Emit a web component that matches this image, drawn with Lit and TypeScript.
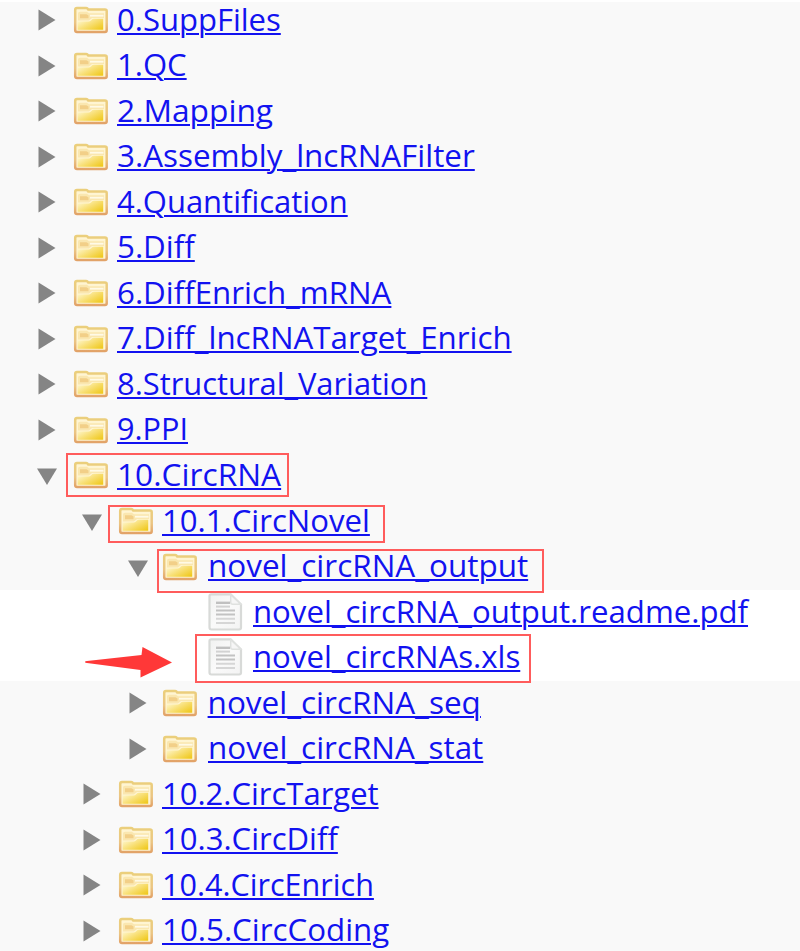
import { LitElement, html, css, svg, nothing } from "lit";
import { customElement, property } from "lit/decorators.js";
import { styleMap } from "lit/directives/style-map.js";

type Kind = "closed" | "open" | "file";
interface Mark { x: number; y: number; w: number; h: number; }
interface Entry { name: string; depth: number; kind: Kind; width: number; mark?: Mark; pointer?: boolean; }

const ENTRIES: Entry[] = [
  { name: "0.SuppFiles", depth: 0, kind: "closed", width: 163.5 },
  { name: "1.QC", depth: 0, kind: "closed", width: 70 },
  { name: "2.Mapping", depth: 0, kind: "closed", width: 156 },
  { name: "3.Assembly_lncRNAFilter", depth: 0, kind: "closed", width: 357.5 },
  { name: "4.Quantification", depth: 0, kind: "closed", width: 231 },
  { name: "5.Diff", depth: 0, kind: "closed", width: 77.5 },
  { name: "6.DiffEnrich_mRNA", depth: 0, kind: "closed", width: 274 },
  { name: "7.Diff_lncRNATarget_Enrich", depth: 0, kind: "closed", width: 394.5 },
  { name: "8.Structural_Variation", depth: 0, kind: "closed", width: 310.5 },
  { name: "9.PPI", depth: 0, kind: "closed", width: 71 },
  { name: "10.CircRNA", depth: 0, kind: "open", width: 164, mark: { x: 66, y: 0, w: 223, h: 44 } },
  { name: "10.1.CircNovel", depth: 1, kind: "open", width: 207.5, mark: { x: 108, y: 6, w: 277, h: 38 } },
  { name: "novel_circRNA_output", depth: 2, kind: "open", width: 320.5, mark: { x: 157, y: 4, w: 387, h: 44 } },
  { name: "novel_circRNA_output.readme.pdf", depth: 3, kind: "file", width: 495.5 },
  { name: "novel_circRNAs.xls", depth: 3, kind: "file", width: 267, mark: { x: 195, y: -1.5, w: 336, h: 49 }, pointer: true },
  { name: "novel_circRNA_seq", depth: 2, kind: "closed", width: 273 },
  { name: "novel_circRNA_stat", depth: 2, kind: "closed", width: 275 },
  { name: "10.2.CircTarget", depth: 1, kind: "closed", width: 216.5 },
  { name: "10.3.CircDiff", depth: 1, kind: "closed", width: 175.5 },
  { name: "10.4.CircEnrich", depth: 1, kind: "closed", width: 211.5 },
  { name: "10.5.CircCoding", depth: 1, kind: "closed", width: 227.5 },
];

const folder = html`<svg class="folder" viewBox="0 0 36 28">
  <defs>
    <linearGradient id="edge" x1="0" y1="0" x2="0" y2="1">
      <stop offset="0" stop-color="#ebcf7c" /><stop offset="0.6" stop-color="#ebc583" /><stop offset="1" stop-color="#e2a368" />
    </linearGradient>
    <linearGradient id="front" x1="0" y1="0.1" x2="1" y2="0.9">
      <stop offset="0" stop-color="#fff8d4" /><stop offset="0.5" stop-color="#f8df74" /><stop offset="1" stop-color="#efc81a" />
    </linearGradient>
  </defs>
  <path d="M2.2 3.7Q2.2 2 4 2H13.2Q14.4 2 15.2 3.4H32Q33.7 3.4 33.7 5V24.3Q33.7 26 32 26H4Q2.2 26 2.2 24.3Z" fill="#fff5d2" stroke="url(#edge)" stroke-width="2.5" />
  <path d="M5 7.5Q5 5.8 7 5.8H14L16 7.3H31V12H19L16 14.5H5Z" fill="#fae7b0" />
  <path d="M7 8.2H13.5L15.5 9.6V12.2H7Z" fill="#f2cf88" />
  <path d="M17 9.7H30.5" stroke="#fffae6" stroke-width="1.8" />
  <path d="M4.6 23.7V15.5H15.5Q17 15.5 18.2 14.2Q19.4 12.8 21 12.8H30.2V23.7Z" fill="url(#front)" />
</svg>`;

const sheet = html`<svg class="sheet" viewBox="0 0 35 38">
  <defs>
    <linearGradient id="paper" x1="0" y1="0" x2="1" y2="1">
      <stop offset="0" stop-color="#f1f2f1" /><stop offset="0.5" stop-color="#fafafa" /><stop offset="1" stop-color="#f3f3f3" />
    </linearGradient>
  </defs>
  <path d="M1.5 3Q1.5 1.3 3.3 1.3H22.7L33 11.4V34.6Q33 36.5 31.2 36.5H3.3Q1.5 36.5 1.5 34.6Z" fill="url(#paper)" stroke="#d8dad8" stroke-width="2.2" />
  <path d="M22.7 1.6V9.2Q22.7 11.2 24.7 11.2H32.7Z" fill="#f6f6f6" stroke="#dfe1df" stroke-width="1.5" />
  <path d="M8 9.8H22" stroke="#c0c0c0" stroke-width="2.4" />
  <path d="M8 13.6H22" stroke="#d2d2d2" stroke-width="2" />
  <path d="M8 17.4H27M8 21.6H27" stroke="#c2c2c2" stroke-width="2" />
  <path d="M8 25.8H27M8 30H27" stroke="#d6d6d6" stroke-width="2" />
</svg>`;

@customElement("tree-row")
class TreeRow extends LitElement {
  @property({ attribute: false }) entry!: Entry;

  static styles = css`
    :host { display: block; height: 45.55px; position: relative; background: #f9f9f9; }
    :host([file]) { background: #fff; }
    .line { display: flex; align-items: flex-start; height: 100%; }
    .toggle { flex: none; width: 20px; height: 22px; margin: 11px 17px 0 37px; }
    .toggle path { fill: #858585; }
    .folder { flex: none; width: 36px; height: 28px; margin: 8px 8px 0 -1px; }
    .deep .folder { margin-left: -2.5px; margin-right: 9.5px; }
    .sheet { flex: none; width: 35px; height: 38px; margin: 2.5px 9.5px 0 72.5px; }
    a { display: block; flex: none; font: 31.5px/32px "Open Sans", "Noto Sans", sans-serif; margin-top: 4.5px;
      color: #1212f0; white-space: nowrap; transform-origin: 0 0; text-decoration: underline;
      text-decoration-thickness: 2px; text-underline-offset: 2px; }
    .mark { position: absolute; box-sizing: border-box; border: 2px solid #ff5c5c; }
    .pointer { position: absolute; left: 84px; top: 9px; width: 90px; height: 34px; }
  `;

  updated() {
    const link = this.renderRoot.querySelector("a") as HTMLElement;
    link.style.transform = `scaleX(${this.entry.width / link.offsetWidth})`;
  }

  render() {
    const { name, depth, kind, mark, pointer } = this.entry;
    return html`
      <div class="line ${depth === 2 ? "deep" : ""}" style=${styleMap({ paddingLeft: `${depth * 45.3}px` })}>
        ${kind === "file" ? sheet : html`
          <svg class="toggle" viewBox="0 0 20 22">
            ${kind === "open" ? svg`<path d="M0 4.5H20L10 21Z" />` : svg`<path d="M1.5 0.5V21.5L18.5 11Z" />`}
          </svg>${folder}`}
        <a>${name}</a>
      </div>
      ${mark ? html`<div class="mark" style=${styleMap({ left: `${mark.x}px`, top: `${mark.y}px`, width: `${mark.w}px`, height: `${mark.h}px` })}></div>` : nothing}
      ${pointer ? html`<svg class="pointer" viewBox="0 0 90 34">
        <path d="M1 17Q1 16 3 16L57.5 10L58.5 2L88 17.5L56.5 32.5V25L3 18Q1 18 1 17Z" fill="#ff3838" /></svg>` : nothing}
    `;
  }
}

@customElement("app-root")
class AppRoot extends LitElement {
  static styles = css`
    :host { display: block; height: 951px; overflow: hidden; background: #fff; }
    .edge { height: 2px; position: relative; z-index: 2; background: #fff; }
    .tree { margin-top: -4px; }
    tree-row { z-index: 0; }
    tree-row.marked { z-index: 1; }
  `;

  render() {
    return html`<div class="edge"></div>
      <div class="tree" role="tree">
        ${ENTRIES.map((e) => html`<tree-row role="treeitem" class=${e.mark ? "marked" : ""} ?file=${e.kind === "file"} .entry=${e}></tree-row>`)}
      </div>`;
  }
}
